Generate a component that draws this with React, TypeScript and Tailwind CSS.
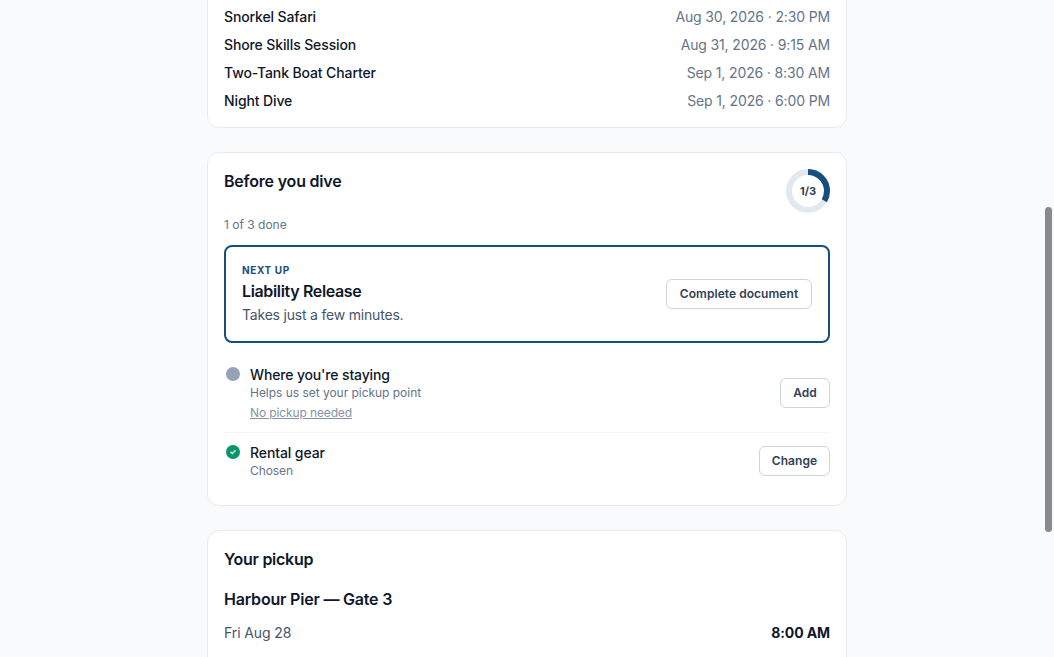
const sessions = [
  ["Snorkel Safari", "Aug 30, 2026 · 2:30 PM"],
  ["Shore Skills Session", "Aug 31, 2026 · 9:15 AM"],
  ["Two-Tank Boat Charter", "Sep 1, 2026 · 8:30 AM"],
  ["Night Dive", "Sep 1, 2026 · 6:00 PM"],
];

function ProgressRing() {
  return (
    <div className="relative h-11 w-11 shrink-0">
      <svg viewBox="0 0 44 44" className="h-11 w-11 -rotate-90" fill="none">
        <circle cx="22" cy="22" r="19" stroke="#e2e8f0" strokeWidth="6" />
        <circle cx="22" cy="22" r="19" stroke="#164e7d" strokeWidth="6" strokeDasharray="39.8 119.4" />
      </svg>
      <span className="absolute inset-0 flex items-center justify-center text-[11px] font-bold text-[#334155]">
        1/3
      </span>
    </div>
  );
}

function SmallButton({ width, children }: { width: string; children: string }) {
  return (
    <button className={`h-[30px] shrink-0 rounded-md border border-[#cbd5e1] bg-white text-xs font-semibold tracking-[0.05px] text-[#334155] ${width}`}>
      {children}
    </button>
  );
}

export default function App() {
  return (
    <div className="relative h-screen overflow-hidden bg-[#f8fafc] font-['Inter',sans-serif] text-[#0f172a]">
      <main className="mx-auto -mt-[10px] flex w-[640px] flex-col gap-6">
        <section className="rounded-xl border border-[#e7ebf0] bg-white p-4">
          <div className="flex flex-col gap-2">
            {sessions.map(([name, when]) => (
              <div key={name} className="flex items-center justify-between text-sm">
                <span className="font-medium tracking-[-0.12px]">{name}</span>
                <span className="tracking-[-0.14px] text-[#64748b]">{when}</span>
              </div>
            ))}
          </div>
        </section>

        <section className="rounded-xl border border-[#e7ebf0] bg-white p-4">
          <div className="flex items-start justify-between">
            <h2 className="text-base font-semibold tracking-[-0.2px]">Before you dive</h2>
            <ProgressRing />
          </div>
          <p className="mt-1 text-xs leading-4 text-[#64748b]">1 of 3 done</p>

          <div className="mt-3 flex items-center justify-between rounded-lg border-2 border-[#164e7d] px-4 py-[15px]">
            <div>
              <p className="text-[10px] font-bold uppercase leading-4 tracking-[0.06em] text-[#164e7d]">Next up</p>
              <p className="mt-[1px] text-base font-semibold leading-6 tracking-[-0.35px]">Liability Release</p>
              <p className="mt-[1px] text-sm leading-[22px] tracking-[-0.2px] text-[#475569]">Takes just a few minutes.</p>
            </div>
            <SmallButton width="w-[146px]">Complete document</SmallButton>
          </div>

          <div className="mt-4 flex items-start gap-[10px] border-b border-[#f1f5f9] pb-[11px]">
            <span className="ml-[2px] mt-[8px] h-[14px] w-[14px] shrink-0 rounded-full bg-[#94a3b8]" />
            <div className="min-w-0 flex-1 pt-[6px]">
              <p className="text-sm font-medium leading-5 tracking-[-0.15px]">Where you're staying</p>
              <p className="text-xs leading-4 tracking-[-0.03px] text-[#64748b]">Helps us set your pickup point</p>
              <a className="mt-1 block text-xs leading-4 tracking-[-0.12px] text-[#8492a6] underline">No pickup needed</a>
            </div>
            <div className="mt-[19px]">
              <SmallButton width="w-[50px]">Add</SmallButton>
            </div>
          </div>

          <div className="flex items-start gap-[10px] py-[10px]">
            <span className="ml-[2px] mt-[2px] flex h-[14px] w-[14px] shrink-0 items-center justify-center rounded-full bg-[#059669]">
              <svg viewBox="0 0 14 14" className="h-[14px] w-[14px]" fill="none">
                <path d="M4.9 7.2l1.5 1.4 2.7-3" stroke="#fff" strokeWidth="1.3" strokeLinecap="round" strokeLinejoin="round" />
              </svg>
            </span>
            <div className="min-w-0 flex-1">
              <p className="text-sm font-medium leading-5 tracking-[-0.1px]">Rental gear</p>
              <p className="text-xs leading-4 tracking-[-0.1px] text-[#64748b]">Chosen</p>
            </div>
            <div className="mt-[3px]">
              <SmallButton width="w-[71px]">Change</SmallButton>
            </div>
          </div>
        </section>

        <section className="rounded-xl border border-[#e7ebf0] bg-white p-4 pb-10">
          <h2 className="text-base font-semibold tracking-[-0.27px]">Your pickup</h2>
          <p className="mt-4 text-base font-semibold tracking-[-0.2px]">Harbour Pier — Gate 3</p>
          <div className="mt-3 flex items-center justify-between text-sm">
            <span className="tracking-[-0.1px] text-[#475569]">Fri Aug 28</span>
            <span className="font-bold tracking-[-0.1px]">8:00 AM</span>
          </div>
        </section>
      </main>

      <div className="absolute right-[2px] top-[207px] h-[325px] w-[7px] rounded-full bg-[#8a8a8a]" />
    </div>
  );
}
